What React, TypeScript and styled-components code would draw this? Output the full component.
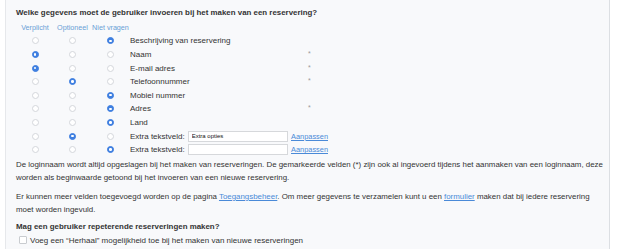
import React from 'react'
import styled, { createGlobalStyle } from 'styled-components'

const GlobalStyle = createGlobalStyle`
	html, body {
		margin: 0;
		padding: 0;
		background: #ffffff;
	}
	body {
		font-family: 'Liberation Sans', Arial, sans-serif;
		color: #333333;
	}
`

const Panel = styled.div`
	margin-left: 5px;
	width: 605px;
	min-height: 249px;
	box-sizing: border-box;
	padding: 7px 6px 0 10px;
	background: #f8f9fb;
	border-left: 1px solid #e6e8eb;
	border-right: 1px solid #dcdfe3;
`

const Heading = styled.h4<{ $top?: number }>`
	margin: ${({ $top }) => $top ?? 0}px 0 0;
	font-size: 7.9px;
	line-height: 12px;
	font-weight: bold;
	color: #333;
`

const FieldGrid = styled.div`
	display: grid;
	grid-template-columns: 38px 37px 39px 178px 20px;
	grid-auto-rows: 13.6px;
	margin-top: 1.5px;
	align-items: center;
`

const ColHead = styled.div`
	font-size: 7.2px;
	color: #6a9fd6;
	text-align: center;
	white-space: nowrap;
`

const Cell = styled.div`
	display: flex;
	justify-content: center;
	align-items: center;
`

const Radio = styled.span<{ $on?: boolean }>`
	width: 7px;
	height: 7px;
	border-radius: 50%;
	box-sizing: border-box;
	background: ${({ $on }) => ($on ? '#3f7fe0' : '#ffffff')};
	border: 1px solid ${({ $on }) => ($on ? '#3f7fe0' : '#d4d7db')};
	position: relative;
	&::after {
		content: '';
		display: ${({ $on }) => ($on ? 'block' : 'none')};
		position: absolute;
		left: 50%;
		top: 50%;
		width: 2.4px;
		height: 2.4px;
		margin: -1.2px 0 0 -1.2px;
		border-radius: 50%;
		background: #fff;
	}
`

const Label = styled.div<{ $wide?: boolean }>`
	display: flex;
	align-items: center;
	font-size: 8px;
	color: #333;
	white-space: nowrap;
	grid-column: ${({ $wide }) => ($wide ? 'span 2' : 'auto')};
`

const Star = styled.div`
	font-size: 7px;
	color: #9a9a9a;
	margin-top: -2px;
`

const TextInput = styled.input`
	width: 102px;
	height: 11px;
	box-sizing: border-box;
	margin: 0 3px 0 3px;
	padding: 0 3px;
	border: 1px solid #d6d8db;
	background: #fff;
	font-family: 'Liberation Sans', Arial, sans-serif;
	font-size: 6px;
	color: #111;
	outline: none;
`

const Link = styled.a`
	color: #4a8ad8;
	text-decoration: underline;
`

const SmallLink = styled(Link)`
	font-size: 7.4px;
`

const Paragraph = styled.p<{ $top: number }>`
	margin: ${({ $top }) => $top}px 0 0;
	font-size: 7.9px;
	line-height: 13.5px;
	color: #333;
	max-width: 590px;
`

const CheckRow = styled.label`
	display: flex;
	align-items: center;
	gap: 3px;
	margin-top: 1px;
	padding-left: 3px;
	font-size: 8px;
	line-height: 13px;
	color: #333;
`

const CheckBox = styled.span`
	width: 6px;
	height: 6px;
	border: 1px solid #c9ccd0;
	border-radius: 1px;
	background: #fff;
`

type Field = {
	label: string
	choice: 0 | 1 | 2
	star?: boolean
	extra?: string
}

const fields: Field[] = [
	{ label: 'Beschrijving van reservering', choice: 2 },
	{ label: 'Naam', choice: 0, star: true },
	{ label: 'E-mail adres', choice: 0, star: true },
	{ label: 'Telefoonnummer', choice: 1, star: true },
	{ label: 'Mobiel nummer', choice: 2 },
	{ label: 'Adres', choice: 2, star: true },
	{ label: 'Land', choice: 2 },
	{ label: 'Extra tekstveld:', choice: 1, extra: 'Extra opties' },
	{ label: 'Extra tekstveld:', choice: 2, extra: '' },
]

export default function App() {
	return (
		<>
			<GlobalStyle />
			<Panel>
				<Heading>Welke gegevens moet de gebruiker invoeren bij het maken van een reservering?</Heading>
				<FieldGrid>
					<ColHead>Verplicht</ColHead>
					<ColHead>Optioneel</ColHead>
					<ColHead>Niet vragen</ColHead>
					<div />
					<div />
					{fields.map((f, i) => (
						<React.Fragment key={i}>
							{[0, 1, 2].map((c) => (
								<Cell key={c}>
									<Radio $on={f.choice === c} />
								</Cell>
							))}
							{f.extra !== undefined ? (
								<Label $wide>
									{f.label}
									<TextInput defaultValue={f.extra} />
									<SmallLink href="#">Aanpassen</SmallLink>
								</Label>
							) : (
								<>
									<Label>{f.label}</Label>
									<Star>{f.star ? '*' : ''}</Star>
								</>
							)}
						</React.Fragment>
					))}
				</FieldGrid>
				<Paragraph $top={1.5}>
					De loginnaam wordt altijd opgeslagen bij het maken van reserveringen. De gemarkeerde velden (*) zijn
					ook al ingevoerd tijdens het aanmaken van een loginnaam, deze worden als beginwaarde getoond bij het
					invoeren van een nieuwe reservering.
				</Paragraph>
				<Paragraph $top={5}>
					Er kunnen meer velden toegevoegd worden op de pagina <Link href="#">Toegangsbeheer</Link>. Om meer
					gegevens te verzamelen kunt u een <Link href="#">formulier</Link> maken dat bij iedere reservering
					moet worden ingevuld.
				</Paragraph>
				<Heading $top={4}>Mag een gebruiker repeterende reserveringen maken?</Heading>
				<CheckRow>
					<CheckBox />
					Voeg een “Herhaal” mogelijkheid toe bij het maken van nieuwe reserveringen
				</CheckRow>
			</Panel>
		</>
	)
}
